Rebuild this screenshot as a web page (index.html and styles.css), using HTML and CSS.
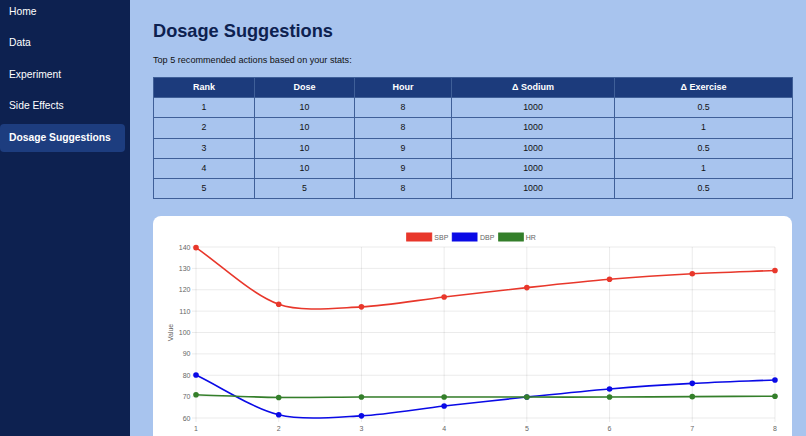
FILE: index.html
```html
<!DOCTYPE html>
<html lang="en">
<head>
<meta charset="utf-8">
<title>Dosage Suggestions</title>
<link rel="stylesheet" href="styles.css">
</head>
<body>
<aside class="sidebar">
  <nav class="nav">
    <a class="nav-item" href="#">Home</a>
    <a class="nav-item" href="#">Data</a>
    <a class="nav-item" href="#">Experiment</a>
    <a class="nav-item" href="#">Side Effects</a>
    <a class="nav-item active" href="#">Dosage Suggestions</a>
  </nav>
</aside>
<main class="main">
  <h1 class="title">Dosage Suggestions</h1>
  <p class="subtitle">Top 5 recommended actions based on your stats:</p>
  <table class="table">
    <colgroup>
      <col class="c-rank"><col class="c-dose"><col class="c-hour"><col class="c-sodium"><col class="c-ex">
    </colgroup>
    <thead>
      <tr><th>Rank</th><th>Dose</th><th>Hour</th><th>Δ Sodium</th><th>Δ Exercise</th></tr>
    </thead>
    <tbody>
      <tr><td>1</td><td>10</td><td>8</td><td>1000</td><td>0.5</td></tr>
      <tr><td>2</td><td>10</td><td>8</td><td>1000</td><td>1</td></tr>
      <tr><td>3</td><td>10</td><td>9</td><td>1000</td><td>0.5</td></tr>
      <tr><td>4</td><td>10</td><td>9</td><td>1000</td><td>1</td></tr>
      <tr><td>5</td><td>5</td><td>8</td><td>1000</td><td>0.5</td></tr>
    </tbody>
  </table>
  <section class="card">
    <svg class="chart" id="chart" width="639" height="240" viewBox="0 0 639 240" xmlns="http://www.w3.org/2000/svg">
      <g class="legend">
        <rect x="253.7" y="17" width="25" height="8" fill="#e8372b" stroke="#e8372b" stroke-width="1"/>
        <text class="lbl" x="281.3" y="23.5">SBP</text>
        <rect x="299.3" y="17" width="24.7" height="8" fill="#0a0ae6" stroke="#0a0ae6" stroke-width="1"/>
        <text class="lbl" x="327" y="23.5">DBP</text>
        <rect x="345.7" y="17" width="24.6" height="8" fill="#347f2a" stroke="#347f2a" stroke-width="1"/>
        <text class="lbl" x="372.7" y="23.5">HR</text>
      </g>
      <g id="grid"></g>
      <g id="labels"></g>
      <text class="lbl" text-anchor="middle" transform="translate(17.7,116.5) rotate(-90)" x="0" y="2.5">Value</text>
      <g id="series"></g>
    </svg>
  </section>
</main>
<script src="script.js"></script>
</body>
</html>
```

FILE: styles.css
```css
* { box-sizing: border-box; }
html, body { margin: 0; padding: 0; }
body {
  display: flex;
  height: 436px;
  overflow: hidden;
  background: #a8c4ee;
  font-family: "Liberation Sans", Arial, sans-serif;
}
.sidebar {
  width: 130px;
  flex: 0 0 130px;
  background: #0d2150;
}
.nav {
  display: flex;
  flex-direction: column;
  gap: 3.4px;
  width: 125px;
  margin-top: -2px;
}
.nav-item {
  display: block;
  height: 28px;
  line-height: 28px;
  padding: 0 9px;
  color: #ffffff;
  font-size: 10.3px;
  text-decoration: none;
  border-radius: 4px;
  white-space: nowrap;
}
.nav-item.active {
  background: #1d3d7f;
  font-weight: bold;
}
.main {
  flex: 1;
  padding: 21px 14px 0 23px;
  overflow: hidden;
}
.title {
  margin: 0;
  font-size: 18.2px;
  line-height: 21px;
  font-weight: bold;
  color: #0d2150;
}
.subtitle {
  margin: 13px 0 0;
  font-size: 9.1px;
  line-height: 11px;
  color: #111111;
}
.table {
  margin-top: 11px;
  width: 639px;
  border-collapse: collapse;
  table-layout: fixed;
  font-size: 8.8px;
}
.c-rank { width: 101px; }
.c-dose { width: 100px; }
.c-hour { width: 97px; }
.c-sodium { width: 163px; }
.c-ex { width: 178px; }
.table th, .table td {
  border: 1px solid #3f5f98;
  text-align: center;
  padding: 4px 4px;
  line-height: 11.2px;
}
.table th {
  background: #1c3b7c;
  color: #ffffff;
  font-weight: bold;
  font-size: 9px;
}
.table td {
  color: #111111;
}
.card {
  margin-top: 17px;
  width: 639px;
  height: 240px;
  background: #ffffff;
  border-radius: 8px;
  overflow: hidden;
}
.chart { display: block; }
.lbl {
  font-family: "Liberation Sans", Arial, sans-serif;
  font-size: 7px;
  fill: #666666;
}
```

FILE: script.js
```js
(function () {
  var NS = "http://www.w3.org/2000/svg";
  var x0 = 43, dx = 82.71, yTop = 31, pxPerUnit = 2.1375;
  function X(i) { return x0 + i * dx; }
  function Y(v) { return yTop + (140 - v) * pxPerUnit; }
  function el(name, attrs, parent) {
    var e = document.createElementNS(NS, name);
    for (var k in attrs) e.setAttribute(k, attrs[k]);
    parent.appendChild(e);
    return e;
  }
  var grid = document.getElementById("grid");
  var labels = document.getElementById("labels");
  var series = document.getElementById("series");
  var v, i;
  for (v = 60; v <= 140; v += 10) {
    el("line", { x1: 39, x2: X(7), y1: Y(v), y2: Y(v), stroke: "rgba(0,0,0,0.08)", "stroke-width": 1 }, grid);
    var t = el("text", { x: 37.5, y: Y(v) + 2.5, "text-anchor": "end", "class": "lbl" }, labels);
    t.textContent = String(v);
  }
  for (i = 0; i < 8; i++) {
    el("line", { x1: X(i), x2: X(i), y1: yTop, y2: Y(60) + 4, stroke: "rgba(0,0,0,0.08)", "stroke-width": 1 }, grid);
    var tx = el("text", { x: X(i), y: 215.2, "text-anchor": "middle", "class": "lbl" }, labels);
    tx.textContent = String(i + 1);
  }
  var data = [
    { color: "#e8372b", values: [139.7, 113.2, 112.0, 116.6, 121.0, 124.9, 127.5, 129.0] },
    { color: "#0a0ae6", values: [80.1, 61.5, 61.0, 65.6, 69.8, 73.6, 76.2, 77.8] },
    { color: "#347f2a", values: [70.9, 69.6, 69.8, 69.8, 69.8, 69.8, 70.0, 70.2] }
  ];
  var tension = 0.3;
  data.forEach(function (s) {
    var pts = s.values.map(function (val, idx) { return { x: X(idx), y: Y(val) }; });
    var n = pts.length;
    pts.forEach(function (p, idx) {
      var prev = pts[idx - 1] || p;
      var next = pts[idx + 1] || p;
      var d01 = Math.hypot(p.x - prev.x, p.y - prev.y);
      var d12 = Math.hypot(next.x - p.x, next.y - p.y);
      var s01 = d01 / (d01 + d12) || 0;
      var s12 = d12 / (d01 + d12) || 0;
      var fa = tension * s01, fb = tension * s12;
      p.cpPrev = { x: p.x - fa * (next.x - prev.x), y: p.y - fa * (next.y - prev.y) };
      p.cpNext = { x: p.x + fb * (next.x - prev.x), y: p.y + fb * (next.y - prev.y) };
    });
    var d = "M" + pts[0].x.toFixed(2) + " " + pts[0].y.toFixed(2);
    for (var k = 1; k < n; k++) {
      var a = pts[k - 1], b = pts[k];
      d += " C" + a.cpNext.x.toFixed(2) + " " + a.cpNext.y.toFixed(2) + " " +
        b.cpPrev.x.toFixed(2) + " " + b.cpPrev.y.toFixed(2) + " " +
        b.x.toFixed(2) + " " + b.y.toFixed(2);
    }
    el("path", { d: d, fill: "none", stroke: s.color, "stroke-width": 1.6 }, series);
    pts.forEach(function (p) {
      el("circle", { cx: p.x, cy: p.y, r: 2.8, fill: s.color }, series);
    });
  });
})();
```
